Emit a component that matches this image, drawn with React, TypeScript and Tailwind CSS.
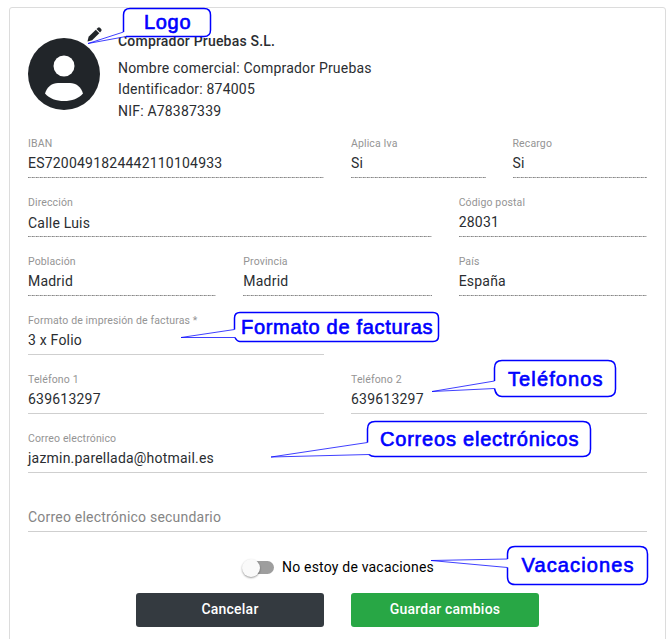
import React from "react";

type FieldProps = {
  label: string;
  value: string;
  span: string;
  disabled?: boolean;
  valueClass?: string;
};

function Field({ label, value, span, disabled, valueClass = "text-[#2a2d31]" }: FieldProps) {
  return (
    <div className={`${span} flex h-[59px] flex-col pt-[18px]`}>
      <span className="h-3 whitespace-nowrap text-[10.5px] leading-[13px] tracking-[0.13px] text-[#949494]">{label}</span>
      <span className={`mt-1.5 h-[22px] whitespace-nowrap text-sm leading-[17px] tracking-[0.21px] ${valueClass}`}>
        {value}
      </span>
      {disabled ? (
        <span className="h-px bg-[repeating-linear-gradient(to_right,#858585_0_1px,#a8a8a8_1px_3px,#d0d0d0_3px_4px)]" />
      ) : (
        <span className="h-px bg-[#cfcfcf]" />
      )}
    </div>
  );
}

type CalloutProps = { text: string; box: string; tail: string; x: number; y: number; width: number };

function Callout({ text, box, tail, x, y, width }: CalloutProps) {
  return (
    <g>
      <path d={box + tail.replace("M", "L") + "Z"} fill="#fff" />
      <path d={box} fill="none" stroke="#0000ff" strokeWidth="1.5" />
      <path d={tail} fill="none" stroke="#0000ff" strokeWidth="0.75" />
      <text
        x={x}
        y={y}
        textLength={width}
        fontSize="20"
        fill="#0000ff"
        stroke="#0000ff"
        strokeWidth="0.65"
        fontFamily="'Liberation Sans', Arial, sans-serif"
      >
        {text}
      </text>
    </g>
  );
}

const callouts: CalloutProps[] = [
  {
    text: "Logo", x: 144, y: 29.3, width: 46.5,
    box: "M123.500 32V15Q123.500 8.500 130 8.500H204Q210.500 8.500 210.500 15V30Q210.500 36.500 204 36.500H126",
    tail: "M126 36.500L88 43.500L123.500 32",
  },
  {
    text: "Formato de facturas", x: 241, y: 334, width: 191.500,
    box: "M234.500 329.500V318Q234.500 312.500 240 312.500H433Q438.500 312.500 438.500 318V336Q438.500 341.500 433 341.500H240Q237 341.500 235 337.500",
    tail: "M235 337.500H181L234.500 329.500",
  },
  {
    text: "Teléfonos", x: 508, y: 385.5, width: 94.5,
    box: "M494.500 381V368Q494.500 360.500 502 360.500H608Q615.500 360.500 615.500 368V389Q615.500 396.500 608 396.500H502Q496 396.500 494.500 388.500",
    tail: "M494.500 388.500L432 391.500L494.500 381",
  },
  {
    text: "Correos electrónicos", x: 380, y: 445.7, width: 198.5,
    box: "M367.500 442.500V429Q367.500 421.500 375 421.500H583Q590.500 421.500 590.500 429V449Q590.500 456.500 583 456.500H375Q371 456.500 369 454.500",
    tail: "M369 454.500L271 457L367.500 442.500",
  },
  {
    text: "Vacaciones", x: 521.5, y: 572.3, width: 112,
    box: "M507.500 559V554Q507.500 546.500 515 546.500H640Q647.500 546.500 647.500 554V577Q647.500 584.500 640 584.500H515Q507.500 584.500 507.500 577V567.500",
    tail: "M507.500 567.500L431 560.500L507.500 559",
  },
];

export default function App() {
  return (
    <main className="relative h-[639px] w-[670px] overflow-hidden bg-white pl-[9px] pt-[7px] font-['Roboto',sans-serif]">
      <section className="h-[650px] w-[657px] rounded-[3px] border border-[#dcdcdc] px-[18px]">
        <header className="flex h-[111px] pt-[21px]">
          <div className="relative h-[81px] w-[90px] shrink-0">
            <svg className="mt-[9px]" width="72" height="72" viewBox="0 0 72 72">
              <circle cx="36" cy="36" r="36" fill="#212529" />
              <circle cx="36" cy="28" r="10.500" fill="#fff" />
              <path d="M17 55.500C19 49 24 45 30 45H42C48 45 53 49 55 55.500C51 60.500 43.500 63 36 63S21 60.500 17 55.500Z" fill="#fff" />
            </svg>
            <svg className="absolute left-[59px] top-[-2px]" width="16" height="16" viewBox="0 0 16 16" fill="#212529">
              <path d="M.5 14.500L1.600 9.800 8.800 2.700 12.300 6.200 5.100 13.300Z" />
              <path d="M9.500 2L11 .7Q12 0 12.900 .8L14.200 2.100Q15 3 14.300 3.900L13 5.500Z" />
            </svg>
          </div>
          <div className="whitespace-nowrap pt-[2px] text-sm leading-[21.5px] tracking-[0.2px] text-[#2a2d31]">
            <h1 className="mb-[5px] font-medium">Comprador Pruebas S.L.</h1>
            <p>Nombre comercial: Comprador Pruebas</p>
            <p>Identificador: 874005</p>
            <p>NIF: A78387339</p>
          </div>
        </header>
        <form className="grid w-[619px] grid-cols-12 gap-x-[27px]">
          <Field label="IBAN" value="ES7200491824442110104933" span="col-span-6" disabled />
          <Field label="Aplica Iva" value="Si" span="col-span-3" disabled />
          <Field label="Recargo" value="Si" span="col-span-3" disabled />
          <Field label="Dirección" value="Calle Luis" span="col-span-8" disabled valueClass="pt-px text-[#2a2d31]" />
          <Field label="Código postal" value="28031" span="col-span-4" disabled />
          <Field label="Población" value="Madrid" span="col-span-4" disabled />
          <Field label="Provincia" value="Madrid" span="col-span-4" disabled />
          <Field label="País" value="España" span="col-span-4" disabled />
          <Field label="Formato de impresión de facturas *" value="3 x Folio" span="col-span-6" />
          <div className="col-span-6" />
          <Field label="Teléfono 1" value="639613297" span="col-span-6" />
          <Field label="Teléfono 2" value="639613297" span="col-span-6" />
          <Field label="Correo electrónico" value="jazmin.parellada@hotmail.es" span="col-span-12" />
          <Field label="" value="Correo electrónico secundario" span="col-span-12" valueClass="text-[#858585]" />
        </form>
        <div className="flex h-[61px] items-center justify-center pb-[5px] pl-[2px] pt-[14px]">
          <span className="flex h-[13px] w-[31px] shrink-0 items-center rounded-full bg-[#9e9e9e]">
            <span className="-ml-px mt-px h-[18px] w-[18px] shrink-0 rounded-full bg-[#fafafa] shadow-[0_1px_2px_rgba(0,0,0,0.4)]" />
          </span>
          <span className="ml-2 whitespace-nowrap text-sm tracking-[0.2px] text-black">No estoy de vacaciones</span>
        </div>
        <div className="flex gap-[27px] pl-[108px] text-sm font-medium tracking-[0.22px] text-white">
          <button className="h-[34px] w-[188px] rounded-[3px] bg-[#343a40] pb-[2px]">Cancelar</button>
          <button className="h-[34px] w-[188px] rounded-[3px] bg-[#28a745] pb-[2px]">Guardar cambios</button>
        </div>
      </section>
      <svg className="absolute left-0 top-0" width="670" height="639" viewBox="0 0 670 639">
        {callouts.map((c) => (
          <Callout key={c.text} {...c} />
        ))}
      </svg>
    </main>
  );
}
